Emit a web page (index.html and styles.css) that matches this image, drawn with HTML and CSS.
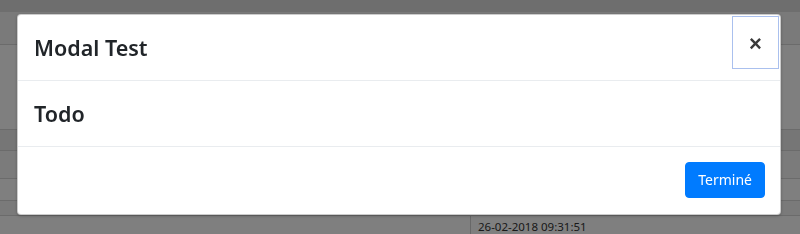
FILE: index.html
```html
<!DOCTYPE html>
<html lang="fr">
<head>
    <meta charset="UTF-8">
    <meta name="viewport" content="width=device-width, initial-scale=1.0">
    <title>Modal Test</title>
    <link rel="stylesheet" href="styles.css">
</head>
<body>
    <div class="page">
        <div class="topbar"></div>
        <div class="row row-head"></div>
        <div class="row row-a"></div>
        <div class="row row-b"></div>
        <div class="row row-c"></div>
        <div class="row row-d"></div>
        <div class="row row-e"></div>
        <div class="row row-last">
            <div class="cell"></div>
            <div class="cell cell-date">26-02-2018 09:31:51</div>
        </div>
    </div>

    <div class="backdrop"></div>

    <div class="modal">
        <div class="modal-header">
            <h5 class="modal-title">Modal Test</h5>
            <button class="close" type="button">&times;</button>
        </div>
        <div class="modal-body">
            <h4>Todo</h4>
        </div>
        <div class="modal-footer">
            <button class="btn btn-primary" type="button">Terminé</button>
        </div>
    </div>
</body>
</html>
```

FILE: styles.css
```css
body {
    margin: 0;
    font-family: "Noto Sans", "Open Sans", Arial, sans-serif;
    background: #fff;
    color: #212529;
    overflow: hidden;
}
.page {
    height: 234px;
    overflow: hidden;
}
.topbar {
    height: 12px;
    background: #dcdcdc;
}
.row {
    border-bottom: 1px solid #d6d6d6;
}
.row-head {
    height: 32px;
    background: #f4f4f4;
}
.row-a {
    height: 84px;
}
.row-b {
    height: 20px;
    background: #ececec;
}
.row-c {
    height: 27px;
    background: #f7f7f7;
}
.row-d {
    height: 21px;
}
.row-e {
    height: 14px;
    background: #f4f4f4;
}
.row-last {
    display: flex;
    border-bottom: none;
}
.cell {
    width: 470px;
    border-right: 1px solid #d0d0d0;
    height: 18px;
}
.cell-date {
    width: auto;
    border-right: none;
    padding: 5px 7px 0;
    font-size: 11.5px;
    line-height: 12px;
    color: #333;
}
.backdrop {
    position: fixed;
    inset: 0;
    background: rgba(0, 0, 0, 0.5);
}
.modal {
    position: absolute;
    top: 14px;
    left: 17px;
    width: 762px;
    background: #fff;
    border: 1px solid rgba(0, 0, 0, 0.2);
    border-radius: 4px;
    box-shadow: 0 1px 3px rgba(0, 0, 0, 0.25);
}
.modal-header {
    display: flex;
    align-items: flex-start;
    padding: 16px;
    border-bottom: 1px solid #e9ecef;
}
.modal-title {
    margin: 0;
    font-size: 21.5px;
    font-weight: 600;
    line-height: 33px;
}
.close {
    margin: -15px -15px -15px auto;
    width: 47px;
    height: 53px;
    padding: 3px 0 0;
    background: transparent;
    border: 1px solid #aac0ee;
    font-family: "Liberation Sans", Arial, sans-serif;
    font-size: 22px;
    font-weight: bold;
    line-height: 1;
    color: #3a3a3a;
    cursor: pointer;
}
.modal-body {
    padding: 16px;
    border-bottom: 1px solid #e9ecef;
}
.modal-body h4 {
    margin: 0;
    font-size: 21.5px;
    font-weight: 600;
    line-height: 33px;
}
.modal-footer {
    display: flex;
    justify-content: flex-end;
    padding: 15px 15px 16px;
}
.btn {
    font-family: inherit;
    font-size: 14px;
    height: 36px;
    line-height: 22px;
    padding: 0 12px;
    border-radius: 4px;
    border: 1px solid transparent;
    cursor: pointer;
}
.btn-primary {
    background: #007bff;
    border-color: #007bff;
    color: #fff;
}
```
